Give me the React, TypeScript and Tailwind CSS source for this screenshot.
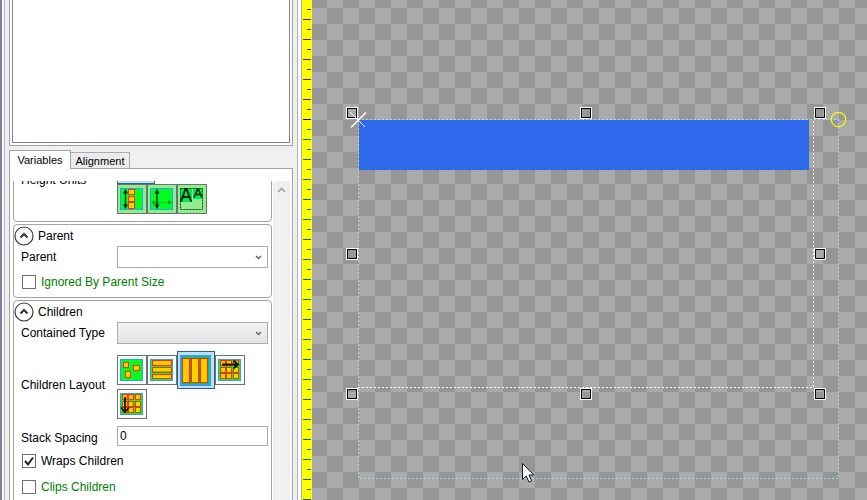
import type { ReactNode } from "react";

const FONT = "font-['Liberation_Sans',Arial,sans-serif]";

/* ---------- icon drawings (24 x 24 grid) ---------- */

function Icon({ children, size = "size-6", bg = true }: { children: ReactNode; size?: string; bg?: boolean }) {
  return (
    <svg viewBox="0 0 24 24" className={size} aria-hidden="true">
      {bg && <rect x="0.5" y="1.5" width="22" height="21" fill="#00ff21" stroke="#2fa0f0" />}
      {children}
    </svg>
  );
}

function Cell({ x, y, w, h }: { x: number; y: number; w: number; h: number }) {
  return <rect x={x} y={y} width={w} height={h} fill="#ffd000" stroke="#ff3000" />;
}

function FreeIcon() {
  return (
    <Icon>
      <Cell x={3.5} y={4.5} w={5} h={5} />
      <Cell x={13.5} y={7.5} w={6} h={5} />
      <Cell x={5.5} y={13.5} w={5} h={6} />
    </Icon>
  );
}

function RowsIcon() {
  return (
    <Icon>
      <Cell x={2.5} y={2.5} w={19} h={5} />
      <Cell x={2.5} y={9.5} w={19} h={5} />
      <Cell x={2.5} y={16.5} w={19} h={4} />
      <path d="M3 14h18" stroke="#a06a00" />
    </Icon>
  );
}

function ColumnsIcon() {
  return (
    <svg viewBox="0 0 32 32" className="size-8" aria-hidden="true">
      <rect x="1" y="2" width="29" height="29" fill="#00c850" stroke="#2fa0f0" strokeWidth="2" />
      <Cell x={2.5} y={4.5} w={7} h={24} />
      <Cell x={11.5} y={4.5} w={7} h={24} />
      <Cell x={20.5} y={4.5} w={7} h={24} />
      <path d="M10.500 4v25M19.500 4v25" stroke="#6a8a00" />
    </svg>
  );
}

function GridCells() {
  return (
    <>
      {[2.5, 9.5, 15.5].map((y) =>
        [2.5, 8.5, 15.5].map((x) => <Cell key={`${x}-${y}`} x={x} y={y} w={5} h={5} />),
      )}
      <path d="M2 14.500h19M8.500 3v17" stroke="#a05a00" />
    </>
  );
}

function GridRightIcon() {
  return (
    <Icon>
      <GridCells />
      <path d="M4 6.500h16M15.500 2.500l4.500 4l-4.500 4" fill="none" stroke="#141400" strokeWidth="1.8" />
    </Icon>
  );
}

function GridDownIcon() {
  return (
    <Icon>
      <GridCells />
      <path d="M5 5v15M1 15.500l4 4.500l4-4.500" fill="none" stroke="#141400" strokeWidth="1.8" />
    </Icon>
  );
}

function VerticalArrow({ x }: { x: number }) {
  return (
    <g transform={`translate(${x} 0)`}>
      <path d="M0 4v16" stroke="#0a2a10" strokeWidth="1.4" />
      <path d="M-2.500 6.500L0 2l2.500 4.500zM-2.500 17.500L0 22l2.500-4.500z" fill="#001a08" />
    </g>
  );
}

function HeightChildrenIcon() {
  return (
    <Icon>
      <VerticalArrow x={5.5} />
      <Cell x={8.5} y={2.5} w={6} h={5} />
      <Cell x={8.5} y={9.5} w={6} h={5} />
      <Cell x={8.5} y={15.5} w={6} h={6} />
      <path d="M8 15.500h7" stroke="#a05a00" />
    </Icon>
  );
}

function HeightAbsoluteIcon() {
  return (
    <Icon>
      <path d="M2 15.500h20" stroke="#08a01c" strokeDasharray="2 1" />
      <path d="M5 13l-4 2.500l4 2.500zM18 13l4 2.500l-4 2.500z" fill="#08a01c" />
      <VerticalArrow x={7} />
    </Icon>
  );
}

function HeightTextIcon() {
  return (
    <Icon bg={false}>
      <rect x="0" y="1" width="12" height="14" fill="#00e850" />
      <rect x="13" y="1" width="10" height="11" fill="#00e850" />
      <rect x="0.5" y="1.5" width="22" height="21" fill="none" stroke="#1c3c1c" strokeDasharray="2 1" />
      <path d="M1 14.500L5.500 2h1.200l4.500 12.500M3 10h6.500" fill="none" stroke="#08200c" strokeWidth="2" />
      <path d="M14 10.500L17.500 2.500h1l3.500 8M15.500 7.500h5" fill="none" stroke="#08200c" strokeWidth="1.6" />
    </Icon>
  );
}

/* ---------- controls ---------- */

function Tile({ label, tone, children }: { label: string; tone: "green" | "white" | "selected"; children?: ReactNode }) {
  const tones = {
    green: "size-[30px] border-[#707070] bg-[#90ee90]",
    white: "size-[30px] border-[#707070] bg-white",
    selected: "size-[38px] border-[#2c628b] bg-[#bee0f2]",
  };
  return (
    <button type="button" aria-label={label} className={`flex shrink-0 border p-[2px] ${tones[tone]}`}>
      {children}
    </button>
  );
}

function Group({ title, className = "", children }: { title?: string; className?: string; children: ReactNode }) {
  return (
    <section className={`rounded-[4px] border border-[#a3a3a8] bg-white ${className}`}>
      {title && (
        <button type="button" className="flex h-[21px] w-full items-center gap-1">
          <svg viewBox="0 0 20 20" className="size-5" aria-hidden="true">
            <circle cx="10" cy="10" r="9" fill="#fff" stroke="#3c3c3c" strokeWidth="1.2" />
            <path d="M6.500 11.500l3.500-3.500l3.500 3.500" fill="none" stroke="#333" strokeWidth="2" />
          </svg>
          <span>{title}</span>
        </button>
      )}
      {children}
    </section>
  );
}

function Field({ label, htmlFor, align = "items-center", className = "", children }: { label: string; htmlFor?: string; align?: string; className?: string; children: ReactNode }) {
  return (
    <div className={`flex pr-[3px] pl-[7px] ${align} ${className}`}>
      <label htmlFor={htmlFor} className="w-24 shrink-0">
        {label}
      </label>
      <div className="min-w-0 flex-1">{children}</div>
    </div>
  );
}

function Combo({ id, className }: { id: string; className: string }) {
  return (
    <div className="relative">
      <select id={id} className={`block h-[22px] w-full appearance-none border px-1 ${className}`} />
      <svg viewBox="0 0 7 5" className="pointer-events-none absolute top-[9px] right-[6px] h-[5px] w-[7px]" aria-hidden="true">
        <path d="M1 1l2.500 2.500L6 1" fill="none" stroke="#606060" strokeWidth="1.4" />
      </svg>
    </div>
  );
}

function Check({ label, checked = false, green = false }: { label: string; checked?: boolean; green?: boolean }) {
  return (
    <label className={`flex h-[26px] items-center gap-[5px] pl-2 ${green ? "text-[#008000]" : "text-black"}`}>
      <span className="relative flex">
        <input type="checkbox" defaultChecked={checked} className="peer size-[14px] appearance-none border border-[#707070] bg-white" />
        <svg viewBox="0 0 14 14" className="pointer-events-none absolute inset-0 hidden size-[14px] peer-checked:block" aria-hidden="true">
          <path d="M3 7l3 3.500L11 3.500" fill="none" stroke="#212121" strokeWidth="2" />
        </svg>
      </span>
      {label}
    </label>
  );
}

/* ---------- left panel ---------- */

function Sidebar() {
  return (
    <aside className="flex w-[284px] shrink-0 flex-col">
      <div className="mb-1 h-[146px] shrink-0 border border-t-0 border-[#a0a0a0] bg-white px-[2px] pb-[2px]">
        <div className="h-full border border-t-0 border-[#7f8492]" />
      </div>

      <div role="tablist" className="flex h-[18px] shrink-0 items-end text-[11px] leading-4">
        <button type="button" role="tab" aria-selected="true" className="relative -mb-px h-[19px] w-[62px] border border-b-0 border-[#a3a3a8] bg-white">
          Variables
        </button>
        <button type="button" role="tab" aria-selected="false" className="-ml-px h-4 w-[60px] border border-b-0 border-[#acacac] bg-[#ececec]">
          Alignment
        </button>
      </div>

      <div className="flex min-h-0 flex-1 border border-b-0 border-[#a3a3a8] bg-white pt-3 pr-[2px] pl-[3px]">
        <div className="mr-px flex min-w-0 flex-1 flex-col gap-[2px] overflow-hidden">
          <Group className="-mt-[41px] shrink-0 pt-[5px] pb-[7px]">
            <Field label="Height Units">
              <div className="flex">
                <Tile label="Selected height unit" tone="selected" />
              </div>
              <div className="flex">
                <Tile label="Relative to children" tone="green">
                  <HeightChildrenIcon />
                </Tile>
                <Tile label="Absolute" tone="green">
                  <HeightAbsoluteIcon />
                </Tile>
                <Tile label="Scaled with text" tone="green">
                  <HeightTextIcon />
                </Tile>
              </div>
            </Field>
          </Group>

          <Group title="Parent" className="shrink-0 pb-[2px]">
            <Field label="Parent" htmlFor="parent" className="mb-px">
              <Combo id="parent" className="border-[#abadb3] bg-white" />
            </Field>
            <Check label="Ignored By Parent Size" green />
          </Group>

          <Group title="Children" className="shrink-0 pb-5">
            <Field label="Contained Type" htmlFor="contained">
              <Combo id="contained" className="border-[#acacac] bg-linear-to-b from-[#f0f0f0] to-[#e5e5e5]" />
            </Field>
            <Field label="Children Layout" className="my-[7px]">
              <div className="flex flex-wrap items-center">
                <Tile label="Regular" tone="white">
                  <FreeIcon />
                </Tile>
                <Tile label="Top to bottom stack" tone="white">
                  <RowsIcon />
                </Tile>
                <Tile label="Left to right stack" tone="selected">
                  <ColumnsIcon />
                </Tile>
                <Tile label="Grid, horizontal" tone="white">
                  <GridRightIcon />
                </Tile>
                <Tile label="Grid, vertical" tone="white">
                  <GridDownIcon />
                </Tile>
              </div>
            </Field>
            <Field label="Stack Spacing" htmlFor="spacing" align="items-end" className="mb-[2px]">
              <input id="spacing" defaultValue="0" className="block h-5 w-full border border-[#abadb3] bg-white px-[2px]" />
            </Field>
            <Check label="Wraps Children" checked />
            <Check label="Clips Children" green />
          </Group>
        </div>

        <div className="flex w-[17px] shrink-0 justify-center bg-[#f0f0f0] pt-[6px]">
          <svg viewBox="0 0 9 6" className="h-[6px] w-[9px]" aria-hidden="true">
            <path d="M1 5l3.500-3.500L8 5" fill="none" stroke="#a0a0a0" strokeWidth="1.6" />
          </svg>
        </div>
      </div>
    </aside>
  );
}

/* ---------- ruler and canvas ---------- */

const ORIGIN = 119;
const TICKS = Array.from({ length: 200 }, (_, i) => 9 + i * 10);

function Ruler() {
  return (
    <svg className="h-full w-[10px] shrink-0 bg-[#ffff00]" aria-hidden="true" shapeRendering="crispEdges">
      {TICKS.map((y, i) => (
        <rect
          key={y}
          x={i % 2 ? 1 : 5}
          y={y}
          width={i % 2 ? 8 : 4}
          height="1"
          fill={y < ORIGIN ? "#8b0000" : y === ORIGIN ? "#000" : "#006400"}
        />
      ))}
    </svg>
  );
}

const HANDLES = [
  [34, 107], [268, 107], [502, 107],
  [34, 248], [502, 248],
  [34, 388], [268, 388], [502, 388],
];

function Canvas() {
  return (
    <main className="relative min-w-0 flex-1 overflow-hidden bg-[repeating-conic-gradient(#969696_0_25%,#aaaaaa_0_50%)] bg-[length:32px_32px] bg-[position:-1px_8px]">
      <div className="absolute top-[120px] left-[47px] h-[50px] w-[450px] bg-[#2f69eb]" />
      <svg className="absolute inset-0 size-full" aria-hidden="true">
        <g fill="none" strokeDasharray="2 2" shapeRendering="crispEdges">
          <path d="M46 387.500H501.500V119" stroke="#fff" />
          <path d="M46 119.500H526.500V478.500H46.500V119" stroke="#add8e6" />
        </g>
        {HANDLES.map(([x, y]) => (
          <g key={`${x}-${y}`} fill="none">
            <rect x={x + 0.5} y={y + 0.5} width="11" height="11" stroke="#fff" />
            <rect x={x + 1.5} y={y + 1.5} width="9" height="9" stroke="#000" />
          </g>
        ))}
        <path d="M38 112l15 15" stroke="#fff" />
        <path d="M39 127.500l15-15" stroke="#fff" strokeWidth="1.6" />
        <circle cx="526.5" cy="119.500" r="7.2" fill="none" stroke="#ffff00" strokeWidth="1.2" />
        <path d="M210.500 463.500v16l3.700-3.500l2.800 6l2.600-1.200l-2.600-5.800h4.800z" fill="#fff" stroke="#10131c" />
      </svg>
    </main>
  );
}

export default function App() {
  return (
    <div className={`flex h-screen overflow-hidden bg-[#f0f0f0] text-[12px] leading-4 text-black ${FONT}`}>
      <div className="flex w-[9px] shrink-0">
        <div className="w-[2px] bg-[#7b8299]" />
        <div className="w-[3px] border-r border-[#b4b4b8] bg-[#f8f8fa]" />
      </div>
      <Sidebar />
      <div className="flex w-[9px] shrink-0 justify-end">
        <div className="w-[5px] border-x border-[#b0b0b4] bg-white" />
      </div>
      <Ruler />
      <Canvas />
    </div>
  );
}
